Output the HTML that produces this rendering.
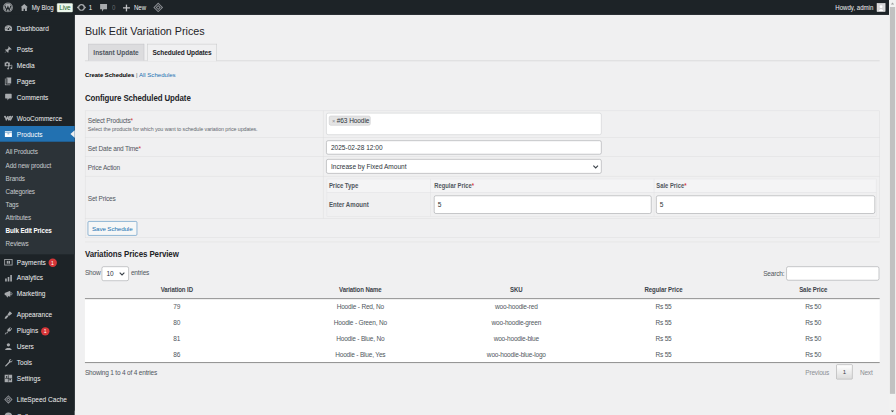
<!DOCTYPE html>
<html><head><meta charset="utf-8">
<style>
html,body{margin:0;padding:0;width:896px;height:415px;overflow:hidden;background:#f0f0f1;}
*{box-sizing:border-box;}
#root{position:absolute;left:0;top:0;width:1920px;height:900px;transform:scale(0.4666667);transform-origin:0 0;overflow:hidden;background:#f0f0f1;font-family:"Liberation Sans",sans-serif;color:#3c434a;font-size:13px;}
.abs{position:absolute;white-space:nowrap;}
.cc{text-align:center;}
.t14{font-size:14px;letter-spacing:-0.42px;}
#bar{position:absolute;z-index:5;left:0;top:0;width:1905px;height:32px;background:#1d2327;color:#f0f0f1;font-size:13px;}
#bar .t{position:absolute;top:1.3px;line-height:32px;white-space:nowrap;transform:scaleY(1.1);}
#menu{position:absolute;left:0;top:32px;width:160px;height:868px;box-shadow:0 -20px 0 #1d2327;background:#1d2327;}
.mi{position:absolute;left:0;width:160px;height:34px;color:#f0f0f1;font-size:14px;}
.mi .lbl{position:absolute;left:36px;top:0.8px;line-height:34px;white-space:nowrap;}
.mi svg{position:absolute;left:8px;top:7px;width:20px;height:20px;}
.sub{position:absolute;left:0;width:160px;background:#2c3338;}
.si{position:absolute;left:12px;top:0;margin-top:1.8px;line-height:28.2px;font-size:13.6px;letter-spacing:-0.3px;color:#c8cbce;white-space:nowrap;}
.badge{position:absolute;top:9px;height:18px;width:18px;border-radius:9px;background:#d63638;color:#fff;font-size:11px;line-height:18px;text-align:center;}
#sb{position:absolute;left:1905px;top:0;width:15px;height:889.3px;background:#f1f1f1;}
</style></head><body>
<div id="root">

<!-- admin bar -->
<div id="bar">
  <svg class="abs" style="left:6px;top:5px" width="22" height="22" viewBox="0 0 22 22"><circle cx="11" cy="11" r="10.5" fill="#a7aaad"/><circle cx="11" cy="11" r="8.6" fill="none" stroke="#1d2327" stroke-width="0.9"/><path d="M4.6 7 L8.3 17 L11 9.6 L13.7 17 L17.4 7" fill="none" stroke="#1d2327" stroke-width="2.2"/></svg>
  <svg class="abs" style="left:44px;top:8px" width="16" height="16" viewBox="0 0 16 16"><path d="M8 0.5 L15.8 7.5 L13.6 7.5 L13.6 15.5 L2.4 15.5 L2.4 7.5 L0.2 7.5 Z" fill="#a7aaad"/><path d="M6.5 15.5 V11 H9.5 V15.5 Z" fill="#1d2327"/></svg>
  <div class="t" style="left:68px">My Blog</div>
  <div class="abs" style="left:122px;top:6.5px;width:34px;height:19px;background:#edf7ee;border:1px solid #e0efe0;border-radius:2px;color:#1e6b2a;font-size:14px;letter-spacing:-0.3px;line-height:16.8px;text-align:center">Live</div>
  <svg class="abs" style="left:164px;top:7px" width="21" height="18" viewBox="0 0 21 18"><circle cx="10.5" cy="9" r="6" fill="none" stroke="#a7aaad" stroke-width="2.6"/><path d="M0.5 9 L4.5 5 L4.5 13 Z M20.5 9 L16.5 5 L16.5 13 Z" fill="#a7aaad"/></svg>
  <div class="t" style="left:190px">1</div>
  <svg class="abs" style="left:214px;top:8px" width="16" height="18" viewBox="0 0 16 18"><path d="M0.5 0.5 H15.5 V12 H8 L4.5 17 V12 H0.5 Z" fill="#a7aaad"/></svg>
  <div class="t" style="left:240px;color:#646970">0</div>
  <svg class="abs" style="left:263px;top:9px" width="16" height="16" viewBox="0 0 16 16"><path d="M8 0.5 V15.5 M0.5 8 H15.5" stroke="#c3c4c7" stroke-width="2.8"/></svg>
  <div class="t" style="left:287px">New</div>
  <svg class="abs" style="left:328px;top:5px" width="22" height="22" viewBox="0 0 22 22"><path d="M11 0.5 L21.5 11 L11 21.5 L0.5 11 Z" fill="#8c8f94"/><path d="M11 3.5 L18.5 11 L11 18.5 L3.5 11 Z" fill="#1d2327"/><path d="M11 5.5 L16.5 11 L11 16.5 L5.5 11 Z" fill="#8c8f94"/><circle cx="11" cy="11" r="2.2" fill="#1d2327"/></svg>
  <div class="t" style="left:1790px">Howdy, admin</div>
  <div class="abs" style="left:1879px;top:7px;width:18px;height:18px;background:#d5d6d8;border:1px solid #e5e5e5;overflow:hidden"><svg width="16" height="16" viewBox="0 0 16 16"><circle cx="8" cy="6.3" r="3" fill="#fff"/><path d="M3.5 16 C4 10.5 12 10.5 12.5 16 Z" fill="#fff"/></svg></div>
</div>

<!-- admin menu -->
<div id="menu">
<div class="mi" style="top:12px"><svg viewBox="0 0 20 20"><path d="M10 3 A8 8 0 0 0 2 11 A8 8 0 0 0 3.5 15.5 H16.5 A8 8 0 0 0 18 11 A8 8 0 0 0 10 3 Z" fill="#a7aaad"/><circle cx="10" cy="11.5" r="1.8" fill="#1d2327"/><path d="M10 11.5 L13.5 6.5" stroke="#1d2327" stroke-width="1.5"/><circle cx="5" cy="10" r="1" fill="#1d2327"/><circle cx="7" cy="6.5" r="1" fill="#1d2327"/><circle cx="15" cy="10" r="1" fill="#1d2327"/></svg><span class="lbl">Dashboard</span></div>
<div class="mi" style="top:57px"><svg viewBox="0 0 20 20"><path d="M10.5 3 L17 9.5 L15.5 10.5 L13.5 9.5 L10 13 L10.5 16 L9 17 L6 14 L2.5 17.5 L2 17 L5.5 13.5 L3 11 L4 9.5 L7 10 L10.5 6.5 L9.5 4.5 Z" fill="#a7aaad"/></svg><span class="lbl">Posts</span></div>
<div class="mi" style="top:91px"><svg viewBox="0 0 20 20"><path d="M2 4 H5 L6 2.5 H9 L10 4 H13 V12 H2 Z" fill="#a7aaad"/><circle cx="7.5" cy="8" r="2.2" fill="#1d2327"/><path d="M10.5 11 L17.5 9.5 V16" fill="none" stroke="#a7aaad" stroke-width="1.6"/><path d="M10.5 11 V17" stroke="#a7aaad" stroke-width="1.6"/><circle cx="9.3" cy="17" r="1.8" fill="#a7aaad"/><circle cx="16.3" cy="16" r="1.8" fill="#a7aaad"/></svg><span class="lbl">Media</span></div>
<div class="mi" style="top:125px"><svg viewBox="0 0 20 20"><path d="M6 2 H16 V15 H6 Z" fill="#a7aaad"/><path d="M4 4 V17 H14 V18.5 H2.5 V4 Z" fill="#a7aaad"/><path d="M7.5 4 V14" stroke="#1d2327" stroke-width="1"/></svg><span class="lbl">Pages</span></div>
<div class="mi" style="top:159px"><svg viewBox="0 0 20 20"><path d="M4 3 H16 Q17 3 17 4 V12 Q17 13 16 13 H11 L8 17.5 V13 H4 Q3 13 3 12 V4 Q3 3 4 3 Z" fill="#a7aaad"/></svg><span class="lbl">Comments</span></div>
<div class="mi" style="top:204px"><svg viewBox="0 0 20 20"><path d="M1.8 7.5 Q2.5 5.5 3.8 8 L5.5 14 L8.5 7 L11 14 L14.5 6.5 M12 7 L14.5 14 L18.5 6.5" fill="none" stroke="#a7aaad" stroke-width="3" stroke-linejoin="round" stroke-linecap="round"/></svg><span class="lbl">WooCommerce</span></div>
<div class="mi" style="top:238px;background:#2271b1;color:#fff"><svg viewBox="0 0 20 20"><path d="M2.5 4 H17.5 V16.5 H2.5 Z" fill="#fff"/><path d="M2.5 7 H17.5" stroke="#2271b1" stroke-width="1"/><path d="M8 9.8 H12" stroke="#2271b1" stroke-width="1.4"/></svg><span class="lbl">Products</span><span style="position:absolute;right:0;top:8.5px;width:0;height:0;border-top:8.5px solid transparent;border-bottom:8.5px solid transparent;border-right:9px solid #f0f0f1"></span></div>
<div class="mi" style="top:512.6px"><svg viewBox="0 0 20 20"><rect x="2" y="4" width="16" height="12" fill="none" stroke="#a7aaad" stroke-width="1.8"/><rect x="6.5" y="7" width="7" height="6" fill="#a7aaad"/><path d="M10 6.5 V13.5" stroke="#1d2327" stroke-width="1"/></svg><span class="lbl">Payments</span><span class="badge" style="left:103.5px">1</span></div>
<div class="mi" style="top:546.6px"><svg viewBox="0 0 20 20"><path d="M3 11 H6.5 V17 H3 Z M8.5 7.5 H12 V17 H8.5 Z M14 3.5 H17.5 V17 H14 Z" fill="#a7aaad"/></svg><span class="lbl">Analytics</span></div>
<div class="mi" style="top:580.6px"><svg viewBox="0 0 20 20"><path d="M2 8 L14 3 V16 L2 12 Z" fill="#a7aaad"/><path d="M5 12 L7 17 H9.5 L8 12.5 Z" fill="#a7aaad"/><circle cx="15.5" cy="9.5" r="2.5" fill="none" stroke="#a7aaad" stroke-width="1.5"/></svg><span class="lbl">Marketing</span></div>
<div class="mi" style="top:625.6px"><svg viewBox="0 0 20 20"><path d="M13 2 L18 7 L11 12 L8 9 Z" fill="#a7aaad"/><path d="M7.5 10 L10 12.5 L6 17.5 C4.5 18.5 2 18 2 18 C2 18 2.5 15.5 3.5 14 Z" fill="#a7aaad"/></svg><span class="lbl">Appearance</span></div>
<div class="mi" style="top:659.6px"><svg viewBox="0 0 20 20"><path d="M13.5 2 L15 3 L12.5 6.5 L14 7.5 L16.5 4 L18 5 L15 9.5 C14 11 12 11.5 10.5 11 L7 16 L6 15 L8.5 11 C7.5 10 7.5 8 8.5 6.5 Z" fill="#a7aaad"/><path d="M2 17 L5 13 L6.5 14 L3.5 18 Z" fill="#a7aaad"/></svg><span class="lbl">Plugins</span><span class="badge" style="left:88px">1</span></div>
<div class="mi" style="top:693.6px"><svg viewBox="0 0 20 20"><circle cx="10" cy="6" r="3.5" fill="#a7aaad"/><path d="M3 17 C3 11.5 17 11.5 17 17 Z" fill="#a7aaad"/></svg><span class="lbl">Users</span></div>
<div class="mi" style="top:727.6px"><svg viewBox="0 0 20 20"><path d="M16.5 2.5 L13.5 5.5 L14.5 7 L16 7.5 L18.5 4.5 C19 7.5 17 10 14 9.5 L5.5 18 C4.5 19 2.5 17.5 3 16.5 L11 8 C10.5 5 13 2 16.5 2.5 Z" fill="#a7aaad"/></svg><span class="lbl">Tools</span></div>
<div class="mi" style="top:761.6px"><svg viewBox="0 0 20 20"><rect x="2" y="2" width="16" height="16" fill="#a7aaad"/><path d="M10 3 V17 M3 10 H17" stroke="#1d2327" stroke-width="1.3"/><rect x="5" y="5" width="2.5" height="3.5" fill="#1d2327"/><rect x="12" y="11.5" width="3.5" height="2.5" fill="#1d2327"/></svg><span class="lbl">Settings</span></div>
<div class="mi" style="top:806.6px"><svg viewBox="0 0 20 20"><path d="M10 1 L19 10 L10 19 L1 10 Z" fill="#8c8f94"/><path d="M10 3.8 L16.2 10 L10 16.2 L3.8 10 Z" fill="#1d2327"/><path d="M10 5.5 L14.5 10 L10 14.5 L5.5 10 Z" fill="#8c8f94"/><circle cx="10" cy="10" r="1.8" fill="#1d2327"/></svg><span class="lbl">LiteSpeed Cache</span></div>
<div class="mi" style="top:842.6px"><svg viewBox="0 0 20 20"><circle cx="10" cy="10" r="8" fill="#a7aaad"/><path d="M12 6 L7 10 L12 14 Z" fill="#1d2327"/></svg><span class="lbl">Collapse menu</span></div>
<div class="sub" style="top:272px;height:240.6px"><div class="si" style="top:7.0px">All Products</div><div class="si" style="top:35.2px">Add new product</div><div class="si" style="top:63.4px">Brands</div><div class="si" style="top:91.6px">Categories</div><div class="si" style="top:119.8px">Tags</div><div class="si" style="top:148.0px">Attributes</div><div class="si" style="top:176.2px;color:#fff;font-weight:bold">Bulk Edit Prices</div><div class="si" style="top:204.4px">Reviews</div></div>
</div>

<div id="content">
<div class="abs" style="left:182px;top:50.6px;line-height:30px;font-size:23px;color:#1d2327">Bulk Edit Variation Prices</div>
<div class="abs" style="left:182px;top:129.5px;width:1703px;height:1px;background:#c3c4c7"></div>
<div class="abs tab" style="left:188.6px;top:94px;width:120px;height:35.5px;background:#dcdcde;border:1px solid #c3c4c7;border-bottom:0;color:#50575e;font-weight:bold;font-size:14px;line-height:34px;text-align:center">Instant Update</div>
<div class="abs tab" style="left:315.4px;top:94px;width:149.6px;height:36.5px;background:#f0f0f1;border:1px solid #c3c4c7;border-bottom:0;color:#1d2327;font-weight:bold;font-size:14px;line-height:34px;text-align:center;letter-spacing:-0.2px">Scheduled Updates</div>
<div class="abs" style="left:182px;top:150px;line-height:20px;font-size:13px"><b style="color:#000;font-size:12.6px">Create Schedules</b> <span style="color:#646970">|</span> <span style="color:#2271b1">All Schedules</span></div>
<div class="abs" style="left:182px;top:200.3px;line-height:20px;font-size:16.9px;font-weight:bold;color:#1d2327;letter-spacing:-0.2px;transform:scaleY(1.13);transform-origin:0 50%">Configure Scheduled Update</div>

<!-- form table -->
<div class="abs" style="left:182px;top:236.6px;width:1703px;height:273.5px;border:1px solid #dcdcde"></div>
<div class="abs hl" style="left:182px;top:294.1px;width:1703px;height:1px;background:#dcdcde"></div>
<div class="abs hl" style="left:182px;top:335.1px;width:1703px;height:1px;background:#dcdcde"></div>
<div class="abs hl" style="left:182px;top:376.5px;width:1703px;height:1px;background:#dcdcde"></div>
<div class="abs hl" style="left:182px;top:467.5px;width:1703px;height:1px;background:#dcdcde"></div>
<div class="abs" style="left:692.3px;top:236.6px;width:1px;height:231.4px;background:#dcdcde"></div>

<div class="t14 abs" style="left:188px;top:248.2px;line-height:20px;color:#50575e">Select Products<span style="color:#d63638">*</span></div>
<div class="abs" style="left:188px;top:268.9px;line-height:14px;font-size:11.5px;letter-spacing:-0.23px;color:#646970">Select the products for which you want to schedule variation price updates.</div>
<div class="t14 abs" style="left:188px;top:308.4px;line-height:20px;color:#50575e">Set Date and Time<span style="color:#d63638">*</span></div>
<div class="t14 abs" style="left:188px;top:349.7px;line-height:20px;color:#50575e">Price Action</div>
<div class="t14 abs" style="left:188px;top:414.7px;line-height:20px;color:#50575e">Set Prices</div>

<div class="abs" style="left:699.2px;top:242.1px;width:589.5px;height:47.2px;background:#fff;border:1px solid #c3c4c7;border-radius:4px"></div>
<div class="abs" style="left:705.2px;top:248px;width:88.8px;height:21px;background:#e4e4e4;border:1px solid #c3c4c7;border-radius:4px;line-height:19px;font-size:14px;letter-spacing:-0.2px;padding-left:5px;color:#2c3338"><span style="color:#8c8f94;font-size:12px">×</span> #63 Hoodie</div>

<div class="abs" style="left:699.2px;top:300.6px;width:589.5px;height:30.3px;background:#fff;border:1px solid #8c8f94;border-radius:4px;font-size:14px;line-height:28px;padding-left:9px;color:#2c3338">2025-02-28 12:00</div>
<div class="abs" style="left:699.2px;top:341.4px;width:589.5px;height:30.2px;background:#fff;border:1px solid #8c8f94;border-radius:4px;font-size:14px;line-height:28px;padding-left:9px;padding-top:1px;color:#2c3338">Increase by Fixed Amount</div>
<svg class="abs" style="left:1270px;top:351.5px" width="13" height="11" viewBox="0 0 13 11"><path d="M1.5 3 L6.5 8 L11.5 3" fill="none" stroke="#3c434a" stroke-width="2.4"/></svg>

<!-- nested table -->
<div class="abs" style="left:699.6px;top:382.7px;width:1178.8px;height:29.4px;background:#f4f4f5"></div>
<div class="abs" style="left:699.6px;top:382.7px;width:1178.8px;height:81.3px;border:1px solid #e2e2e4"></div>
<div class="abs" style="left:699.6px;top:411.6px;width:1178.8px;height:1px;background:#e2e2e4"></div>
<div class="abs" style="left:922px;top:382.7px;width:1px;height:81.3px;background:#e2e2e4"></div>
<div class="abs" style="left:1400.5px;top:382.7px;width:1px;height:81.3px;background:#e2e2e4"></div>
<div class="abs" style="left:704.8px;top:388.1px;line-height:20px;transform:scaleY(1.1);transform-origin:0 50%;font-weight:bold;color:#50575e;letter-spacing:-0.2px">Price Type</div>
<div class="abs" style="left:930.4px;top:388.1px;line-height:20px;transform:scaleY(1.1);transform-origin:0 50%;font-weight:bold;color:#50575e;font-size:12.5px">Regular Price<span style="color:#d63638">*</span></div>
<div class="abs" style="left:1406.4px;top:388.1px;line-height:20px;transform:scaleY(1.1);transform-origin:0 50%;font-weight:bold;color:#50575e;font-size:12.5px">Sale Price<span style="color:#d63638">*</span></div>
<div class="abs" style="left:704.8px;top:429.6px;line-height:20px;transform:scaleY(1.1);transform-origin:0 50%;font-weight:bold;color:#50575e">Enter Amount</div>
<div class="abs" style="left:930.4px;top:418.7px;width:465.9px;height:39.4px;background:#fff;border:1px solid #8c8f94;border-radius:4px;font-size:14px;line-height:37px;padding-left:6.5px;color:#2c3338">5</div>
<div class="abs" style="left:1406.4px;top:418.7px;width:468.4px;height:39.4px;background:#fff;border:1px solid #8c8f94;border-radius:4px;font-size:14px;line-height:37px;padding-left:6.5px;color:#2c3338">5</div>

<div class="abs" style="left:187.5px;top:474px;width:106px;height:31px;background:#f6f7f7;border:1px solid #2271b1;border-radius:3px;color:#2271b1;font-size:13.4px;letter-spacing:-0.25px;line-height:31.5px;text-align:center">Save Schedule</div>

<div class="abs" style="left:182px;top:517.5px;width:1703px;height:1px;background:#dcdcde"></div>

<div class="abs" style="left:182px;top:535.2px;line-height:20px;font-size:16.9px;font-weight:bold;color:#1d2327;letter-spacing:-0.15px;transform:scaleY(1.13);transform-origin:0 50%">Variations Prices Perview</div>

<div class="t14 abs" style="left:182px;top:575px;line-height:20px;color:#50575e">Show</div>
<div class="abs" style="left:218.1px;top:570.9px;width:57.5px;height:31px;background:#fff;border:1px solid #8c8f94;border-radius:4px;font-size:14px;line-height:29px;padding-left:9px;color:#2c3338">10</div>
<svg class="abs" style="left:255px;top:581px" width="13" height="11" viewBox="0 0 13 11"><path d="M1.5 3 L6.5 8 L11.5 3" fill="none" stroke="#3c434a" stroke-width="2.4"/></svg>
<div class="t14 abs" style="left:280.5px;top:575px;line-height:20px;color:#50575e">entries</div>

<div class="t14 abs" style="left:1635.4px;top:575.6px;line-height:20px;color:#50575e">Search:</div>
<div class="abs" style="left:1684.7px;top:570.6px;width:199.7px;height:30px;background:#fff;border:1px solid #8c8f94;border-radius:4px"></div>

<!-- preview table -->
<div class="abs" style="left:182px;top:640px;width:1703px;height:136px;background:#fff"></div>
<div class="abs" style="left:182px;top:638.57px;width:1703px;height:2.143px;background:#888"></div>
<div class="abs" style="left:182px;top:775.71px;width:1703px;height:2.143px;background:#888"></div>
<div class="abs cc" style="left:228.89999999999998px;width:300px;top:611.6px;line-height:20px;font-weight:bold;color:#3c434a;letter-spacing:-0.2px;transform:scaleY(1.12)">Variation ID</div>
<div class="abs cc" style="left:622.1px;width:300px;top:611.6px;line-height:20px;font-weight:bold;color:#3c434a;letter-spacing:-0.2px;transform:scaleY(1.12)">Variation Name</div>
<div class="abs cc" style="left:956.4000000000001px;width:300px;top:611.6px;line-height:20px;font-weight:bold;color:#3c434a;letter-spacing:-0.2px;transform:scaleY(1.12)">SKU</div>
<div class="abs cc" style="left:1271.8px;width:300px;top:611.6px;line-height:20px;font-weight:bold;color:#3c434a;letter-spacing:-0.2px;transform:scaleY(1.12)">Regular Price</div>
<div class="abs cc" style="left:1592.6px;width:300px;top:611.6px;line-height:20px;font-weight:bold;color:#3c434a;letter-spacing:-0.2px;transform:scaleY(1.12)">Sale Price</div>
<div class="t14 abs cc" style="left:228.89999999999998px;width:300px;top:647.6px;line-height:20px;color:#50575e">79</div>
<div class="t14 abs cc" style="left:622.1px;width:300px;top:647.6px;line-height:20px;color:#50575e">Hoodie - Red, No</div>
<div class="t14 abs cc" style="left:956.4000000000001px;width:300px;top:647.6px;line-height:20px;color:#50575e">woo-hoodie-red</div>
<div class="t14 abs cc" style="left:1271.8px;width:300px;top:647.6px;line-height:20px;color:#50575e">Rs 55</div>
<div class="t14 abs cc" style="left:1592.6px;width:300px;top:647.6px;line-height:20px;color:#50575e">Rs 50</div>
<div class="t14 abs cc" style="left:228.89999999999998px;width:300px;top:681.7px;line-height:20px;color:#50575e">80</div>
<div class="t14 abs cc" style="left:622.1px;width:300px;top:681.7px;line-height:20px;color:#50575e">Hoodie - Green, No</div>
<div class="t14 abs cc" style="left:956.4000000000001px;width:300px;top:681.7px;line-height:20px;color:#50575e">woo-hoodie-green</div>
<div class="t14 abs cc" style="left:1271.8px;width:300px;top:681.7px;line-height:20px;color:#50575e">Rs 55</div>
<div class="t14 abs cc" style="left:1592.6px;width:300px;top:681.7px;line-height:20px;color:#50575e">Rs 50</div>
<div class="t14 abs cc" style="left:228.89999999999998px;width:300px;top:715.6px;line-height:20px;color:#50575e">81</div>
<div class="t14 abs cc" style="left:622.1px;width:300px;top:715.6px;line-height:20px;color:#50575e">Hoodie - Blue, No</div>
<div class="t14 abs cc" style="left:956.4000000000001px;width:300px;top:715.6px;line-height:20px;color:#50575e">woo-hoodie-blue</div>
<div class="t14 abs cc" style="left:1271.8px;width:300px;top:715.6px;line-height:20px;color:#50575e">Rs 55</div>
<div class="t14 abs cc" style="left:1592.6px;width:300px;top:715.6px;line-height:20px;color:#50575e">Rs 50</div>
<div class="t14 abs cc" style="left:228.89999999999998px;width:300px;top:749.4px;line-height:20px;color:#50575e">86</div>
<div class="t14 abs cc" style="left:622.1px;width:300px;top:749.4px;line-height:20px;color:#50575e">Hoodie - Blue, Yes</div>
<div class="t14 abs cc" style="left:956.4000000000001px;width:300px;top:749.4px;line-height:20px;color:#50575e">woo-hoodie-blue-logo</div>
<div class="t14 abs cc" style="left:1271.8px;width:300px;top:749.4px;line-height:20px;color:#50575e">Rs 55</div>
<div class="t14 abs cc" style="left:1592.6px;width:300px;top:749.4px;line-height:20px;color:#50575e">Rs 50</div>

<div class="t14 abs" style="left:182px;top:787.7px;line-height:20px;color:#50575e">Showing 1 to 4 of 4 entries</div>
<div class="t14 abs" style="left:1725.6px;top:788px;line-height:20px;color:#8c8f94">Previous</div>
<div class="abs" style="left:1791.9px;top:780.9px;width:35.1px;height:32.5px;background:linear-gradient(#fff,#dcdcdc);border:1px solid #979797;border-radius:2px;line-height:30px;text-align:center;color:#3c434a">1</div>
<div class="t14 abs" style="left:1842.6px;top:788px;line-height:20px;color:#8c8f94">Next</div>
</div>


<div id="sb"><div style="position:absolute;left:2px;top:15.4px;width:11px;height:828.5px;background:#c1c1c1"></div><svg style="position:absolute;left:0;top:0" width="15" height="15" viewBox="0 0 15 15"><path d="M4 9.5 L7.5 5.5 L11 9.5 Z" fill="#a3a3a3"/></svg><svg style="position:absolute;left:0;top:874.3px" width="15" height="15" viewBox="0 0 15 15"><path d="M4 5.5 L7.5 9.5 L11 5.5 Z" fill="#505050"/></svg></div>
</div>
</body></html>
